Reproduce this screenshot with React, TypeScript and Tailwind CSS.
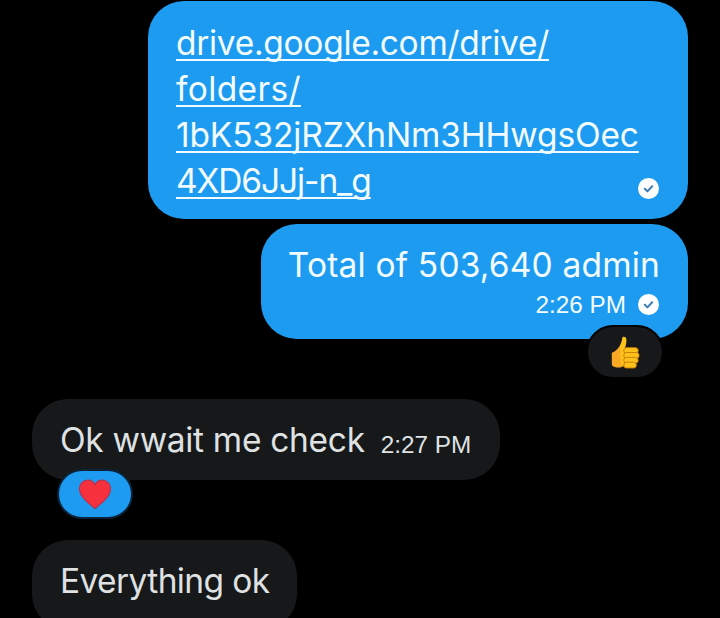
import React from "react";

const CheckBadge: React.FC = () => (
  <svg width="21" height="21" viewBox="0 0 21 21" className="shrink-0">
    <circle cx="10.5" cy="10.5" r="10.5" fill="#ffffff" />
    <path d="M6.8 10.8l2.6 2.6 4.800-5.200" fill="none" stroke="#3c7fb5" strokeWidth="2" strokeLinecap="round" strokeLinejoin="round" />
  </svg>
);

const ThumbsUp: React.FC = () => (
  <svg width="29" height="33" viewBox="0 0 32 34" preserveAspectRatio="none">
    <path d="M1 17.5c3-1 6.500-3.500 8.500-7 1.800-3 2.500-6 3-8.500.4-1.800 4.200-1.500 4.500 1.500.3 3.200-.8 6.500-1.600 9l-1 19H6c-2.500-1-5-1.500-5-3z" fill="#fcc21b" />
    <path d="M1 17.500c3-1 6.500-3.500 8.500-7l2 22H6c-2.500-1-5-1.500-5-3z" fill="#f9a825" />
    <rect x="14" y="12" width="16" height="6" rx="3" fill="#fcc21b" stroke="#c77d0a" strokeWidth="1" />
    <rect x="14" y="17" width="17" height="6" rx="3" fill="#fcc21b" stroke="#c77d0a" strokeWidth="1" />
    <rect x="14" y="22" width="16" height="6" rx="3" fill="#fcc21b" stroke="#c77d0a" strokeWidth="1" />
    <rect x="14" y="27" width="14" height="6" rx="3" fill="#fcc21b" stroke="#c77d0a" strokeWidth="1" />
  </svg>
);

const Heart: React.FC = () => (
  <svg width="34" height="31" viewBox="0 0 34 32">
    <path d="M17 30.500C12 26 1 19 1 10c0-5 3.800-8.800 8.500-8.800 3.200 0 6 1.700 7.500 4.600 1.500-2.900 4.300-4.600 7.500-4.600C29.200 1.200 33 5 33 10c0 9-11 16-16 20.500z" fill="#f7303e" stroke="#b8304f" strokeWidth="1.200" />
  </svg>
);

const linkLines = [
  { text: "drive.google.com/drive/", className: "tracking-[-0.3px]" },
  { text: "folders/", className: "tracking-[0.37px]" },
  { text: "1bK532jRZXhNm3HHwgsOec", className: "tracking-[-0.14px]" },
  { text: "4XD6JJj-n_g", className: "tracking-[-1.1px]" },
];

export default function App() {
  return (
    <div className="h-[618px] w-[720px] overflow-hidden bg-black pt-px font-['Inter','Liberation_Sans',sans-serif]">
      <div className="flex flex-col items-end pr-8">
        {/* link bubble */}
        <div className="relative flex h-[218px] w-[540px] flex-col rounded-[36px] bg-[#1d9bf0] pl-7 pt-[19px] text-[33.5px] leading-[46px] text-[#f2fbff]">
          {linkLines.map((line) => (
            <span
              key={line.text}
              className={`${line.className} underline decoration-2 underline-offset-[4px] [text-decoration-skip-ink:none]`}
            >
              {line.text}
            </span>
          ))}
          <div className="absolute bottom-[20px] right-[29px]">
            <CheckBadge />
          </div>
        </div>

        <div className="mt-[5px] flex h-[115px] w-[427px] flex-col items-end rounded-[36px] bg-[#1d9bf0] pr-7 pt-[18px] text-[#f2fbff]">
          <span className="text-[33.5px] leading-[46px] tracking-[0.18px]">Total of 503,640 admin</span>
          <div className="flex items-center gap-3 pr-[1px]">
            <span className="mt-px font-['Liberation_Sans',sans-serif] text-[24.3px] leading-[32px]">2:26 PM</span>
            <CheckBadge />
          </div>
        </div>

        {/* reaction sits over the bubble edge */}
        <div className="z-10 -mt-[14px] mr-6 flex h-[54px] w-[78px] items-center justify-center rounded-full border-2 border-black bg-[#16181a]">
          <ThumbsUp />
        </div>
      </div>

      <div className="mt-5 flex flex-col items-start pl-8">
        <div className="flex h-[81px] w-[468px] items-center rounded-[36px] bg-[#16181a] pl-7 text-[#dfe1e2]">
          <span className="text-[33.5px] leading-[46px] tracking-[-0.3px]">Ok wwait me check</span>
          <span className="ml-4 mt-[10px] font-['Liberation_Sans',sans-serif] text-[24.3px] leading-[32px]">2:27 PM</span>
        </div>

        <div className="z-10 -mt-[11px] ml-[25px] flex h-[50px] w-[76px] items-center justify-center rounded-full border-2 border-[#0b2238] bg-[#1d9bf0]">
          <Heart />
        </div>

        <div className="mt-[21px] flex h-[90px] w-[265px] items-start rounded-[36px] bg-[#16181a] pl-7 pt-[18px] text-[#dfe1e2]">
          <span className="text-[33.5px] leading-[46px] tracking-[-0.6px]">Everything ok</span>
        </div>
      </div>
    </div>
  );
}
